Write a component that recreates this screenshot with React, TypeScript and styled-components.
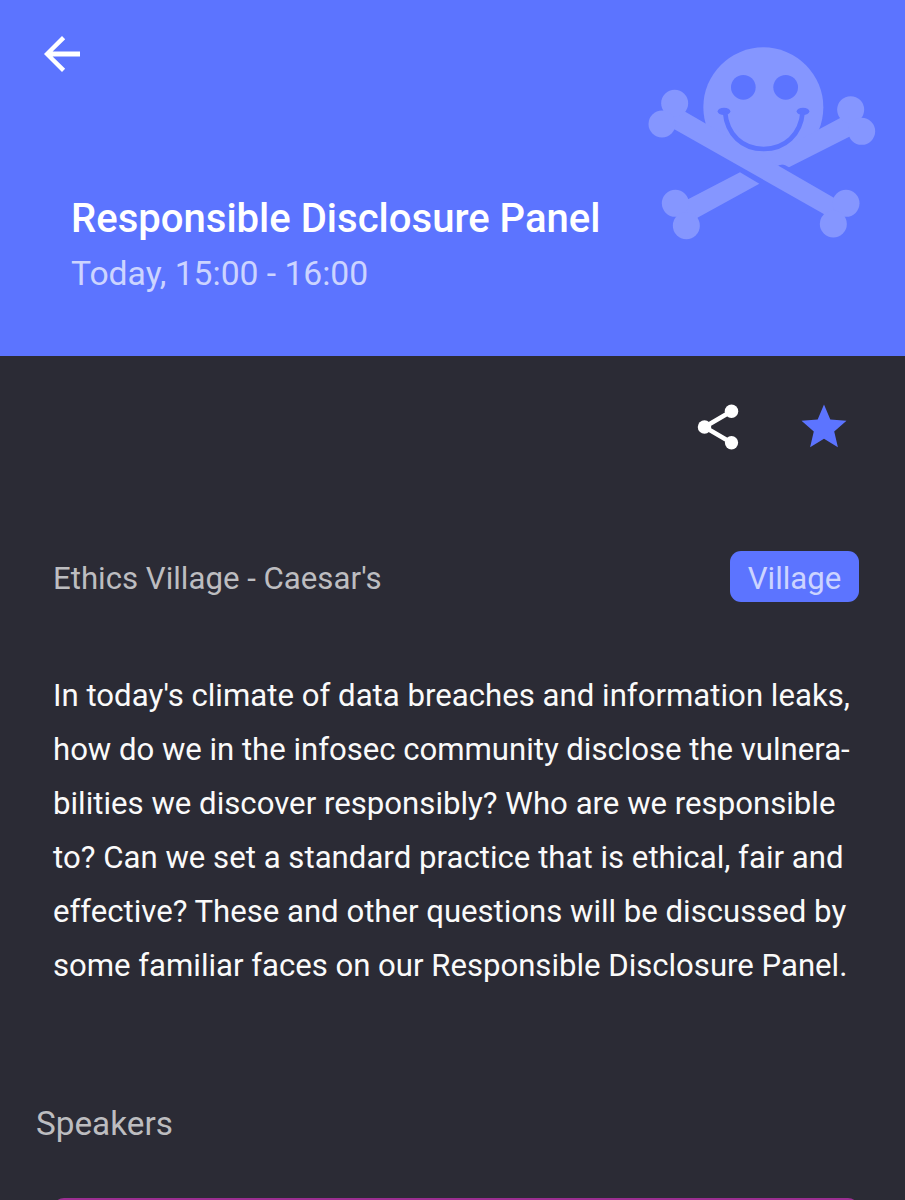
import React from "react";
import styled, { createGlobalStyle } from "styled-components";

const blue = "#5c74ff";
const dark = "#2b2b35";

const GlobalStyle = createGlobalStyle`
  * { box-sizing: border-box; }
  body { margin: 0; background: ${dark}; font-family: Roboto, sans-serif; overflow: hidden; }
`;

const Screen = styled.main`
  width: 905px;
  height: 1200px;
  overflow: hidden;
  display: flex;
  flex-direction: column;
  background: ${dark};
`;

const Header = styled.header`
  height: 356px;
  flex: none;
  display: flex;
  justify-content: space-between;
  background: ${blue};
  padding: 27px 10px 0 35px;
`;

const HeaderMain = styled.div`
  display: flex;
  flex-direction: column;
  white-space: nowrap;
  width: 600px;
`;

const IconButton = styled.button<{ $color: string }>`
  width: 54px;
  height: 54px;
  padding: 0;
  border: 0;
  background: none;
  color: ${(p) => p.$color};
  svg { display: block; width: 100%; height: 100%; fill: currentColor; }
`;

const Title = styled.h1`
  margin: 114px 0 0 36px;
  font-size: 40.05px;
  line-height: 48px;
  font-weight: 500;
  color: #fff;
`;

const Time = styled.p`
  margin: 9px 0 0 36px;
  font-size: 33.7px;
  letter-spacing: -0.03px;
  line-height: 44px;
  color: #ccd4ff;
`;

const Mascot = styled.svg`
  width: 260px;
  height: 220px;
  flex: none;
  margin-top: 3px;
`;

const Actions = styled.div`
  display: flex;
  justify-content: flex-end;
  gap: 52.5px;
  padding: 44px 54px 0 0;
`;

const Meta = styled.div`
  display: flex;
  justify-content: space-between;
  align-items: center;
  height: 51px;
  margin: 97px 46px 0 53px;
`;

const Location = styled.span`
  font-size: 31.2px;
  line-height: 40px;
  margin-top: 4px;
  color: #bdbdc0;
`;

const Tag = styled.span`
  width: 129px;
  height: 51px;
  padding-top: 4px;
  border-radius: 11px;
  display: flex;
  align-items: center;
  justify-content: center;
  background: ${blue};
  color: #ccd4ff;
  font-size: 31.2px;
`;

const Description = styled.p`
  margin: 67px 0 0 53px;
  font-size: 31.15px;
  line-height: 54px;
  color: #fafafa;
  white-space: nowrap;
`;

const Line = styled.span<{ $spacing: number }>`
  display: block;
  letter-spacing: ${(p) => p.$spacing}px;
`;

const SectionTitle = styled.h2`
  margin: 109px 0 0 36px;
  font-size: 33.3px;
  line-height: 44px;
  font-weight: 400;
  color: #bdbdc0;
`;

const SpeakerCard = styled.div`
  flex: none;
  height: 120px;
  margin: 51.5px 46px 0 53px;
  border-radius: 11px;
  background: #9c2f92;
`;

const lines = [
  { text: "In today's climate of data breaches and information leaks,", spacing: 0.015 },
  { text: "how do we in the infosec community disclose the vulnera-", spacing: -0.02 },
  { text: "bilities we discover responsibly? Who are we responsible", spacing: 0.015 },
  { text: "to? Can we set a standard practice that is ethical, fair and", spacing: 0.02 },
  { text: "effective? These and other questions will be discussed by", spacing: -0.01 },
  { text: "some familiar faces on our Responsible Disclosure Panel.", spacing: -0.015 },
];

const knobs = [
  [119, 220], [81, 282], [647, 239], [680, 304],
  [633, 520], [595, 582], [121, 520], [154, 587],
];

function SmileyBones() {
  return (
    <Mascot viewBox="0 0 780 660" fill="#8596ff" aria-hidden="true">
      <circle cx="385" cy="232" r="180" />
      <path d="M119 227L152 246L598 504L633 520L595 582L565 551L118 298L81 282Z" />
      <path d="M400 380L555 296L614 265L647 239L680 304L643 320L462 412C450 406 442 400 428 407Z" />
      <path d="M121 520L162 506L315 427L373 461L190 562L154 587Z" />
      {knobs.map(([x, y]) => (
        <circle key={`${x}-${y}`} cx={x} cy={y} r="40.5" />
      ))}
      <g fill={blue}>
        <circle cx="325" cy="172" r="37" />
        <circle cx="452" cy="172" r="37" />
        <ellipse cx="267" cy="244" rx="19" ry="11" />
        <ellipse cx="504" cy="244" rx="19" ry="11" />
      </g>
      <path d="M270 246C276 314 322 357 386 357C450 357 497 314 503 246" fill="none" stroke={blue} strokeWidth="14" />
    </Mascot>
  );
}

export default function App() {
  return (
    <Screen>
      <GlobalStyle />
      <Header>
        <HeaderMain>
          <IconButton $color="#fff" aria-label="Back">
            <svg viewBox="0 0 24 24">
              <path d="M20 10.85H7.83l5.59-5.44L12 4l-8 8 8 8 1.41-1.41L7.83 13.15H20z" />
            </svg>
          </IconButton>
          <Title>Responsible Disclosure Panel</Title>
          <Time>Today, 15:00 - 16:00</Time>
        </HeaderMain>
        <SmileyBones />
      </Header>
      <Actions>
        <IconButton $color="#fff" aria-label="Share">
          <svg viewBox="0 0 24 24">
            <path d="M18 5L6 12L18 19" fill="none" stroke="currentColor" strokeWidth="2" />
            <circle cx="18" cy="5" r="3" />
            <circle cx="6" cy="12" r="3" />
            <circle cx="18" cy="19" r="2.95" />
          </svg>
        </IconButton>
        <IconButton $color={blue} aria-label="Bookmark">
          <svg viewBox="0 0 24 24">
            <path d="M12 17.27L18.18 21l-1.64-7.03L22 9.24l-7.19-.61L12 2 9.19 8.63 2 9.24l5.46 4.73L5.82 21z" />
          </svg>
        </IconButton>
      </Actions>
      <Meta>
        <Location>Ethics Village - Caesar's</Location>
        <Tag>Village</Tag>
      </Meta>
      <Description>
        {lines.map((line) => (
          <Line key={line.text} $spacing={line.spacing}>{line.text}</Line>
        ))}
      </Description>
      <SectionTitle>Speakers</SectionTitle>
      <SpeakerCard />
    </Screen>
  );
}
